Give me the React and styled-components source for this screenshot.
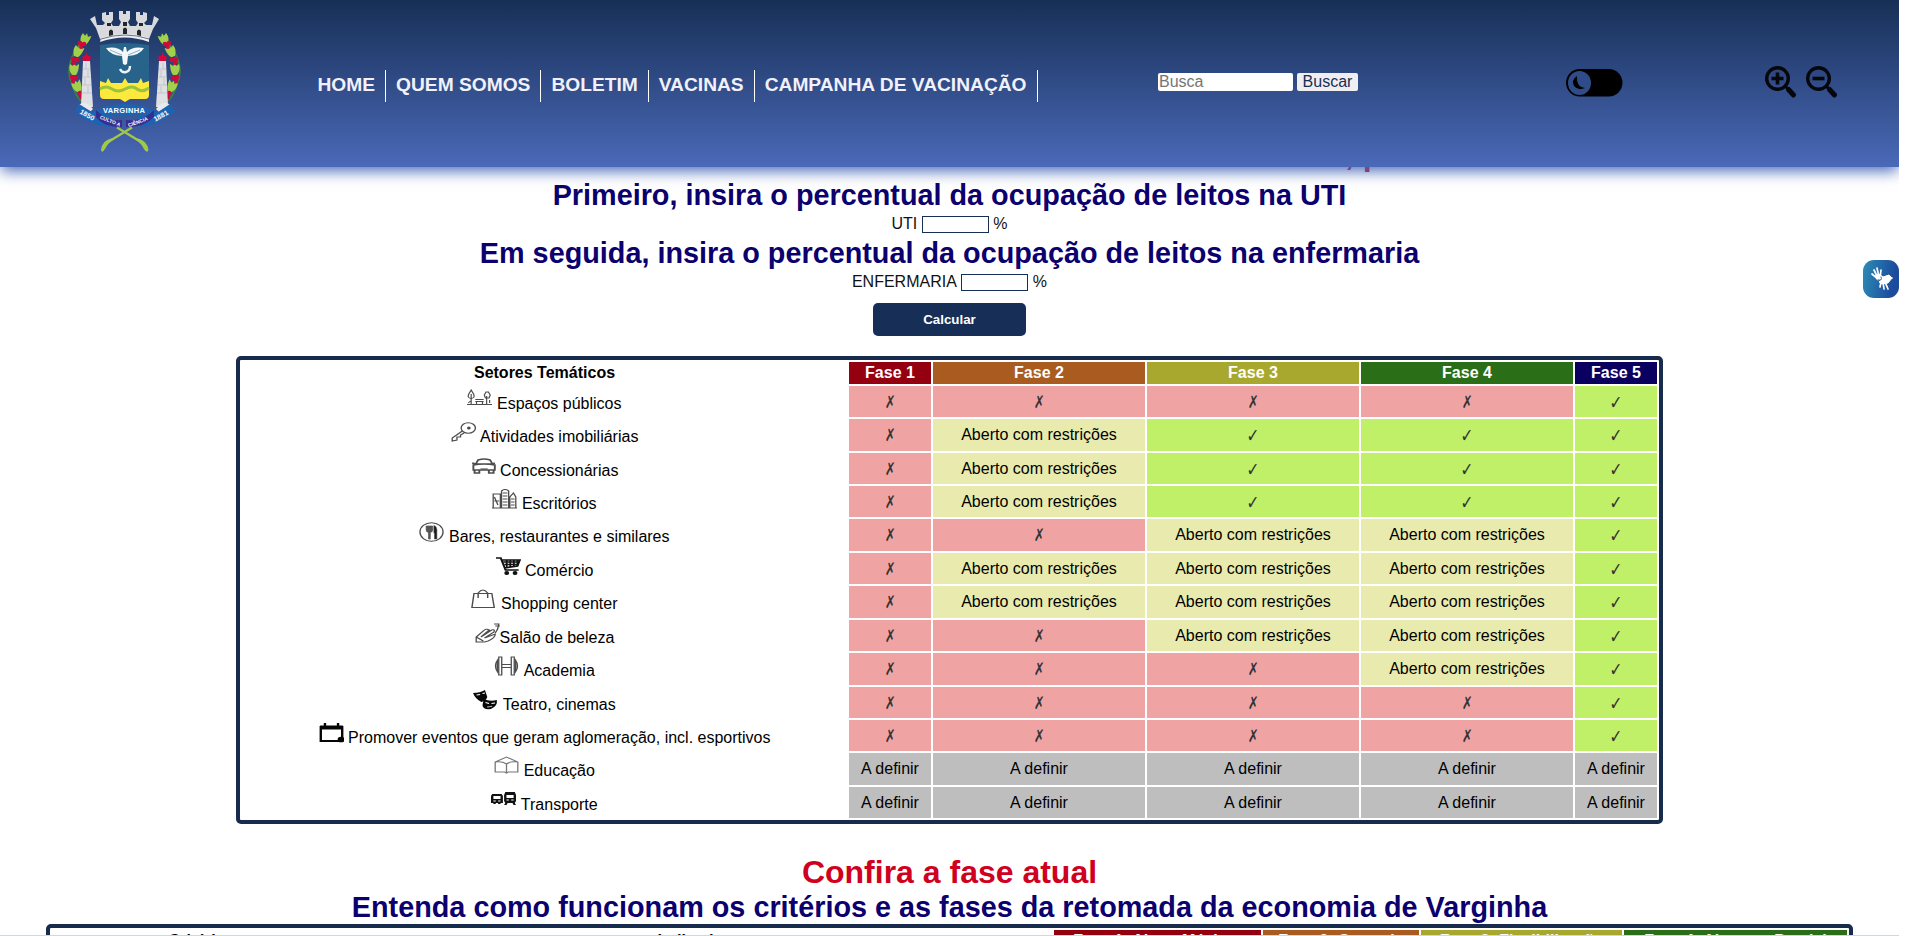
import React from 'react';
import styled, { createGlobalStyle } from 'styled-components';

const Global = createGlobalStyle`
  *{box-sizing:border-box}
  html,body{margin:0;padding:0;height:936px;overflow:hidden;background:#fff}
  body{font-family:"Liberation Sans",Arial,sans-serif;font-size:16px;color:#000}
  h1,h2{margin:0;font-weight:bold;text-align:center;white-space:nowrap}
`;

const Page = styled.div`
  position: relative;
  width: 1899px;
  height: 936px;
  overflow: hidden;
`;
const Header = styled.header`
  position: relative;
  z-index: 2;
  display: flex;
  height: 167px;
  background: linear-gradient(#172f56, #4a69b8);
  box-shadow: 0 5px 14px -1px #4a69b8;
`;
const Brand = styled.div`
  width: 307.500px;
  padding: 8px 0 0 65px;
  svg { display: block; }
`;
const Nav = styled.nav`
  display: flex;
  width: 850.500px;
  padding-top: 70px;
`;
const NavLink = styled.a`
  height: 32px;
  padding: 0 10px;
  border-right: 1px solid #fff;
  color: #f0f1fb;
  font-size: 19.2px;
  font-weight: bold;
  line-height: 30px;
  white-space: nowrap;
`;
const Search = styled.form`
  display: flex;
  gap: 4px;
  width: 408px;
  padding-top: 73px;
`;
const SearchInput = styled.input`
  width: 135px;
  height: 18px;
  padding: 0 1px;
  border: 0;
  border-radius: 2px;
  background: #fff;
  font: 16px/18px "Liberation Sans", Arial, sans-serif;
  &::placeholder { color: #757575; }
`;
const SearchButton = styled.button`
  width: 61px;
  height: 18px;
  padding: 0;
  border: 0;
  border-radius: 2px;
  background: #efeff2;
  color: #172f56;
  font: 16px/18px "Liberation Sans", Arial, sans-serif;
`;
const ThemeToggle = styled.div`
  width: 198px;
  padding-top: 69px;
`;
const ZoomTools = styled.div`
  display: flex;
  gap: 7px;
  padding-top: 65px;
`;

const HiddenTitle = styled.h1`
  height: 20px;
  margin-top: -13px;
  padding-left: 1345px;
  color: #c8102e;
  font-size: 32px;
  line-height: 0;
  && { text-align: left; }
`;
const Title = styled.h2`
  height: ${p => (p.$red ? 37 : 33)}px;
  color: ${p => (p.$red ? '#d00020' : '#0b006e')};
  font-size: ${p => (p.$red ? 32 : 28.8)}px;
  line-height: ${p => (p.$red ? 37 : 33)}px;
`;
const Simulator = styled.section`
  padding-top: 5px;
`;
const Field = styled.label`
  display: flex;
  justify-content: center;
  gap: 4.5px;
  height: 25px;
  line-height: 18px;
  padding-top: 3px;
  color: #111;
`;
const Percent = styled.input`
  width: 67px;
  height: 17px;
  margin-top: 1px;
  padding: 0;
  border: 1px solid #172f56;
  background: #fff;
`;
const Calculate = styled.button`
  display: block;
  width: 153px;
  height: 33px;
  margin: 8px auto 20px;
  border: 0;
  border-radius: 5px;
  background: #172f56;
  color: #fff;
  font: bold 13.33px "Liberation Sans", Arial, sans-serif;
`;

const Phases = styled.div`
  display: grid;
  grid-template-columns: 605px 82px 212px 212px 212px 82px;
  grid-template-rows: 22px 31px 32px 31px 31px 32px 31px 32px 31px 32px 31px 31px 32px 31px;
  gap: 2px;
  width: 1427px;
  height: 468px;
  margin: 0 auto 30px;
  padding: 2px;
  border: 4px solid #172b4d;
  border-radius: 5px;
`;
const HeadCell = styled.div`
  background: ${p => p.$bg || 'transparent'};
  color: ${p => (p.$bg ? '#fff' : '#000')};
  font-weight: bold;
  line-height: 22px;
  text-align: center;
`;
const Sector = styled.div`
  display: flex;
  justify-content: center;
  gap: ${p => (p.$tight ? 0 : 4.5)}px;
  padding-top: 1px;
  line-height: 34px;
  white-space: nowrap;
  svg { margin-top: 2px; flex: none; }
`;
const tones = { x: '#f0a3a3', r: '#e9ebae', v: '#bff068', d: '#bebebe' };
const Status = styled.div`
  overflow: hidden;
  background: ${p => tones[p.$kind]};
  line-height: 31px;
  text-align: center;
  white-space: nowrap;
`;
const Mark = styled.span`
  display: inline-block;
  color: #333;
  font: ${p => (p.$check ? 19 : 17.5)}px/33px "DejaVu Sans", sans-serif;
  transform: scaleX(${p => (p.$check ? 0.8 : 0.75)});
`;
const Criteria = styled.div`
  display: grid;
  grid-template-columns: 299px 699px 207px 156px 201px 223px;
  gap: 2px;
  width: 1807px;
  height: 60px;
  margin: 0 auto;
  padding: 2px;
  border: 4px solid #172b4d;
  border-radius: 5px;
`;
const CriteriaHead = styled(HeadCell)`
  height: 22px;
  line-height: 21px;
  white-space: nowrap;
`;
const BottomEdge = styled.div`
  position: absolute;
  z-index: 3;
  left: 0;
  bottom: 0;
  width: 100%;
  height: 1px;
  background: #d3d7d9;
`;
const SignWidget = styled.button`
  position: absolute;
  z-index: 3;
  top: 260px;
  right: 0;
  width: 36px;
  height: 38px;
  padding: 0;
  border: 0;
  border-radius: 11px;
  background: linear-gradient(100deg, #2e8db5, #1c4b9e 80%);
`;

const side = (
  <g>
    <path d="M17 33 Q-2 57 7 76 Q10 88 19 96" fill="none" stroke="#3f7a48" strokeWidth="2" />
    {[[20, 31, 20], [13, 43, 20], [9, 61, 0], [12, 78, -25], [22, 93, -30]].map(([x, y, r]) => (
      <path key={y} transform={`translate(${x} ${y}) rotate(${r})`} fill="#a3d04b"
        d="M-4-5 -1-3 0-6 2-3 5-5 Q5 2 2 6 L-2 6 Q-6 1-4-5Z" />
    ))}
    {[[17, 36], [10, 52], [9, 70], [17, 86]].map(([x, y]) => (
      <g key={y} fill="#d2083c"><circle cx={x - 2} cy={y - 1} r="2.3" /><circle cx={x + 2} cy={y} r="2.3" /><circle cx={x - 1} cy={y + 3} r="2" /></g>
    ))}
    <path d="M18 53h7l3 46H16Z" fill="#dfe0e3" />
    <path d="M18 61h7M17.5 69h8M17 77h9M17 85h10M21 55v6M23 62v7M20 70v7M23 78v7" stroke="#b7b9c2" strokeWidth=".7" />
    <path d="M18 53Q16 47 20 48L21 44 23 48Q27 47 25 53Z" fill="#d2083c" />
    <path d="M14 97Q20 91 28 101L25 104 14 102Z" fill="#e8ebee" />
  </g>
);

const Emblem = () => (
  <svg width="120" height="146" viewBox="0 0 120 146">
    {side}
    <g transform="translate(119 0) scale(-1 1)">{side}</g>
    <path d="M25 11 30 8 32 17 38 17 40 15 37 12 37 5 41 4 41 7 44 7 44 4 48 4 48 12 46 15 48 18 54 18 56 14 54 11 54 3 58 3 58 6 61 6 61 3 65 3 65 11 63 14 65 18 71 18 73 15 71 12 71 4 75 4 75 7 78 7 78 4 82 5 82 12 79 15 81 17 87 17 89 8 94 11 88 21 84 31Q60 22 35 31L31 20Z" fill="#d8dadd" />
    <path d="M36 30Q60 22 84 30L84 34Q60 25 35 34Z" fill="#eef0f2" />
    <path d="M36 31Q60 23 84 31" stroke="#6b7385" fill="none" />
    <path d="M44 28v-5q2-3 4 0v4ZM58 26v-5q2-3 4 0v5ZM72 27v-4q2-3 4 0v5ZM42 15h4v3h-4ZM58 14h4v4h-4ZM74 15h4v3h-4Z" fill="#24252b" />
    <path d="M35 37Q60 33 84 37V76H35Z" fill="#28638c" />
    <path d="M35 73 41 75 43 70 46 75 57 75 60 70 63 75 73 75 76 70 78 75 84 73V87Q84 91 80 91H65L60 94 55 91H39Q35 91 35 87Z" fill="#fbe93d" />
    <path d="M35 81Q41 77 47 81T60 81T72 81T84 80" fill="none" stroke="#9ac23b" strokeWidth="3" />
    <path d="M41 40Q53 38 58 44L59 39H61L62 44Q67 38 79 40 75 47 63 48L62 56 60 57 58 56 57 48Q45 47 41 40Z" fill="#f3f7f9" />
    <path d="M45 42 57 47M75 42 63 47" stroke="#87b2c9" />
    <path d="M55 61Q57 65 61 64 65 63 65 58" fill="none" stroke="#edf3f7" strokeWidth="2.4" />
    <path d="M14 96 10 103Q23 117 44 119L48 106Q60 110 72 106L76 119Q98 116 110 103L105 96 93 104 78 98Q60 94 42 98L27 104Z" fill="#1d63b2" />
    <path d="M31 102Q42 114 57 112V119Q38 119 31 109ZM89 102Q78 114 61 112V119Q80 119 89 109Z" fill="#352e91" />
    <path d="M52 119.500 76 134M67 119.500 43 134" stroke="#a1c945" strokeWidth="2.200" />
    <path d="M71 130Q82 132 83.500 142 82 146 79 141 76 135 71 132ZM48 130Q37 132 36 142 37 146 40 141 43 135 48 132Z" fill="#a1c945" />
    <g fill="#fff" fontFamily="Liberation Sans, Arial, sans-serif" fontWeight="bold" textAnchor="middle">
      <text x="59" y="104.500" fontSize="7.500" textLength="42">VARGINHA</text>
      <text transform="translate(21 109) rotate(29)" fontSize="7">1850</text>
      <text transform="translate(97 110) rotate(-29)" fontSize="7">1881</text>
      <text transform="translate(44.500 114.500) rotate(22)" fontSize="5">CULTO A</text>
      <text transform="translate(73.500 115.500) rotate(-20)" fontSize="5">CIÊNCIA</text>
    </g>
  </svg>
);

const Toggle = () => (
  <svg width="57" height="28" viewBox="0 0 57 28">
    <rect x="0" y="0" width="56.500" height="27.500" rx="13.700" fill="#000" />
    <ellipse cx="13.500" cy="14" rx="11.500" ry="12" fill="#2f4c88" />
    <path d="M11 7Q5 11 8 17 12 22 19 19 10 18 11 7Z" fill="#000" />
  </svg>
);

const Magnifier = ({ minus }) => (
  <svg width="34" height="34" viewBox="0 0 34 34" fill="none" stroke="#05070c">
    <circle cx="13.500" cy="13.500" r="10.800" strokeWidth="3.400" />
    <path d="M21 21 24 24" strokeWidth="3" />
    <path d="M24.500 24.500 29.500 30" strokeWidth="5" strokeLinecap="round" />
    <path d={minus ? 'M7.500 13.500h12' : 'M7.500 13.500h12M13.500 7.500v12'} strokeWidth="3.600" />
  </svg>
);

const art = {
  park: <g strokeWidth="1"><path d="M3.500 15V5M16.500 15V7M0 15.500h21M7 10.500h7M7 12.500h7M8 13v3M13 13v3M1 14l2-2M19 14v-3" /><path d="M3.500 1 1.500 5Q0 9 3.500 9.500 7 9 5.500 5ZM16 3l-1.500 3 1 3h3l1-3L18 3Z" /></g>,
  key: <g><ellipse cx="14.500" cy="6" rx="6" ry="5.300" /><circle cx="15" cy="6" r="1" fill="#222" /><path d="M9.500 9 1 16 1 19 5 18 5 15 8 15 8 13 11 11" /></g>,
  car: <g><path d="M4 8 6 4Q11 2 16 4L18 8M1 7 4 8H18L20 7M2 9Q11 7 20 9V14H2ZM3 14v3h4v-3M15 14v3h4v-3" strokeWidth="1.600" /><path d="M8 13h6" /></g>,
  city: <g><path d="M1 19V5H7V19M8 19V2Q11-1 14 2V19M15 19V8L18 4 20 8V19M0 19h21M9 4h4M9 7h4M9 10h4M9 13h4M9 16h4M2 8l3 8M2 12h4M16 10h3M16 13h3M16 16h3" /></g>,
  food: <g><ellipse cx="10.500" cy="10" rx="9.700" ry="9.300" /><path d="M6 4v4Q6 10 8 10.500V17H9.500V10.500Q11.500 10 11.500 8V4Z" fill="#555" strokeWidth=".600" /><path d="M12.500 3.500Q15.500 4 15 11V17H13V11H12.500Z" fill="#1c1c1c" strokeWidth=".500" /></g>,
  cart: <g stroke="#111"><path d="M0 2H4L8 14H19M4.500 4H20L18 10 7 12" strokeWidth="1.700" /><path d="M6 6h13M7 8.500h11M9 4v7M12 4v7M15 4v7M18 4v6" strokeWidth="1.500" /><circle cx="9" cy="17" r="1.500" fill="#111" /><circle cx="16" cy="17" r="1.500" fill="#111" /></g>,
  bag: <path d="M2.500 4.500H17.500L19.500 18.500H.800ZM6 9V4Q10-2 14 4V9" strokeWidth="1.200" />,
  nails: <g><path d="M1 19V14L7 8Q9 5 12 7L5 14 14 7Q17 6 16 9L8 15 17 11Q17 15 11 18L8 19ZM1 14l6 4" /><path d="M16 1h4L19 6 17 10M17 3h4" /></g>,
  gym: <g><path d="M4 1h2.500v18H4ZM14.500 1H17v18h-2.500ZM6.500 8.500h8M6.500 11.500h8" /><path d="M3 4Q-.500 10 3 16ZM18 4Q21.500 10 18 16Z" fill="#aaa" /></g>,
  masks: <g stroke="none" fill="#080808"><path d="M0 3Q6 3 10 0L12 7Q11 11 7 12 2 9 0 3Z" /><path d="M9 9Q14 12 20 10 21 16 15 19 8 20 8 15Z" /><path d="M3 5l3-.5M8 3.500l2-.5M10.500 12.500l3 1M15.500 13.500l3-.5M12 17q3 0 4-1" stroke="#fff" strokeWidth="1" /></g>,
  calendar: <g stroke="#050505"><path d="M1.500 4V18H19.500V4Z" strokeWidth="2" /><path d="M1 4.500H20" strokeWidth="4" /><path d="M5 0v4M16 0v4" strokeWidth="2" /><circle cx="18.500" cy="16.500" r="2.300" fill="#050505" /></g>,
  book: <path d="M1 6 10.500 1 20 6V16H12L10.500 17 9 16H1ZM1 6Q7 5 10.500 8 14 5 20 6M10.500 8v9" stroke="#777" />,
  transit: <g stroke="none" fill="#111"><path fillRule="evenodd" d="M1 4H9L10 6V13H8V14H6V13H4V14H2V13H0V6ZM2 6V9H8V6ZM2 10.500v1h2v-1ZM6 10.500v1h2v-1ZM12 2H20L21 5V11L20 13 21 15H19L18 13H14L13 15H11L12 13 11 11V5ZM13 5V8H19V5ZM13 9.500v1h2v-1ZM17 9.500v1h2v-1Z" /></g>,
};

const Glyph = ({ name }) => (
  <svg width="25" height="20" viewBox="0 0 21 20" preserveAspectRatio="none" fill="none" stroke="#4c4c4c" strokeWidth="1.100">{art[name]}</svg>
);

const rows = [
  ['park', 'Espaços públicos', 'xxxxv'],
  ['key', 'Atividades imobiliárias', 'xrvvv'],
  ['car', 'Concessionárias', 'xrvvv'],
  ['city', 'Escritórios', 'xrvvv'],
  ['food', 'Bares, restaurantes e similares', 'xxrrv'],
  ['cart', 'Comércio', 'xrrrv'],
  ['bag', 'Shopping center', 'xrrrv'],
  ['nails', 'Salão de beleza', 'xxrrv'],
  ['gym', 'Academia', 'xxxrv'],
  ['masks', 'Teatro, cinemas', 'xxxxv'],
  ['calendar', 'Promover eventos que geram aglomeração, incl. esportivos', 'xxxxv'],
  ['book', 'Educação', 'ddddd'],
  ['transit', 'Transporte', 'ddddd'],
];
const phaseColors = ['#940010', '#aa5b20', '#a9a82e', '#2a6e18', '#09005f'];
const content = { x: <Mark>✗</Mark>, v: <Mark $check>✓</Mark>, r: 'Aberto com restrições', d: 'A definir' };

export default function App() {
  return (
    <Page>
      <Global />
      <Header>
        <Brand><Emblem /></Brand>
        <Nav>
          {['HOME', 'QUEM SOMOS', 'BOLETIM', 'VACINAS', 'CAMPANHA DE VACINAÇÃO'].map(t => <NavLink key={t}>{t}</NavLink>)}
        </Nav>
        <Search>
          <SearchInput placeholder="Busca" />
          <SearchButton type="button">Buscar</SearchButton>
        </Search>
        <ThemeToggle><Toggle /></ThemeToggle>
        <ZoomTools><Magnifier /><Magnifier minus /></ZoomTools>
      </Header>
      <HiddenTitle>, p</HiddenTitle>
      <Simulator>
        <Title>Primeiro, insira o percentual da ocupação de leitos na UTI</Title>
        <Field>UTI <Percent /> %</Field>
        <Title>Em seguida, insira o percentual da ocupação de leitos na enfermaria</Title>
        <Field>ENFERMARIA <Percent /> %</Field>
        <Calculate>Calcular</Calculate>
      </Simulator>
      <Phases>
        <HeadCell>Setores Temáticos</HeadCell>
        {phaseColors.map((c, i) => <HeadCell key={c} $bg={c}>Fase {i + 1}</HeadCell>)}
        {rows.map(([icon, label, states]) => (
          <React.Fragment key={label}>
            <Sector $tight={icon === 'nails'}><Glyph name={icon} />{label}</Sector>
            {[...states].map((k, i) => <Status key={i} $kind={k}>{content[k]}</Status>)}
          </React.Fragment>
        ))}
      </Phases>
      <Title $red>Confira a fase atual</Title>
      <Title>Entenda como funcionam os critérios e as fases da retomada da economia de Varginha</Title>
      <Criteria>
        <CriteriaHead>Critérios</CriteriaHead>
        <CriteriaHead>Indicadores</CriteriaHead>
        <CriteriaHead $bg="#940010">Fase 1: Alerta Máximo</CriteriaHead>
        <CriteriaHead $bg="#aa5b20">Fase 2: Controle</CriteriaHead>
        <CriteriaHead $bg="#a9a82e">Fase 3: Flexibilização</CriteriaHead>
        <CriteriaHead $bg="#2a6e18">Fase 4: Abertura Parcial</CriteriaHead>
      </Criteria>
      <BottomEdge />
      <SignWidget>
        <svg width="36" height="38" viewBox="0 0 36 38" fill="none" stroke="#fff" strokeLinecap="round">
          <path d="M15 19 9 14M15 18 11 10M16 17 14 8M17 18 18 10M20 22 21 29M22 22 25 29M18 22 17 27M25 19 29 18" strokeWidth="1.700" />
          <path d="M12 16 16 14 20 17 26 15 29 18 25 23 19 24 16 22 19 19 15 20Z" fill="#fff" />
          <path d="M15 20Q20 21 18 17" stroke="#2564a7" strokeWidth="1" />
        </svg>
      </SignWidget>
    </Page>
  );
}
